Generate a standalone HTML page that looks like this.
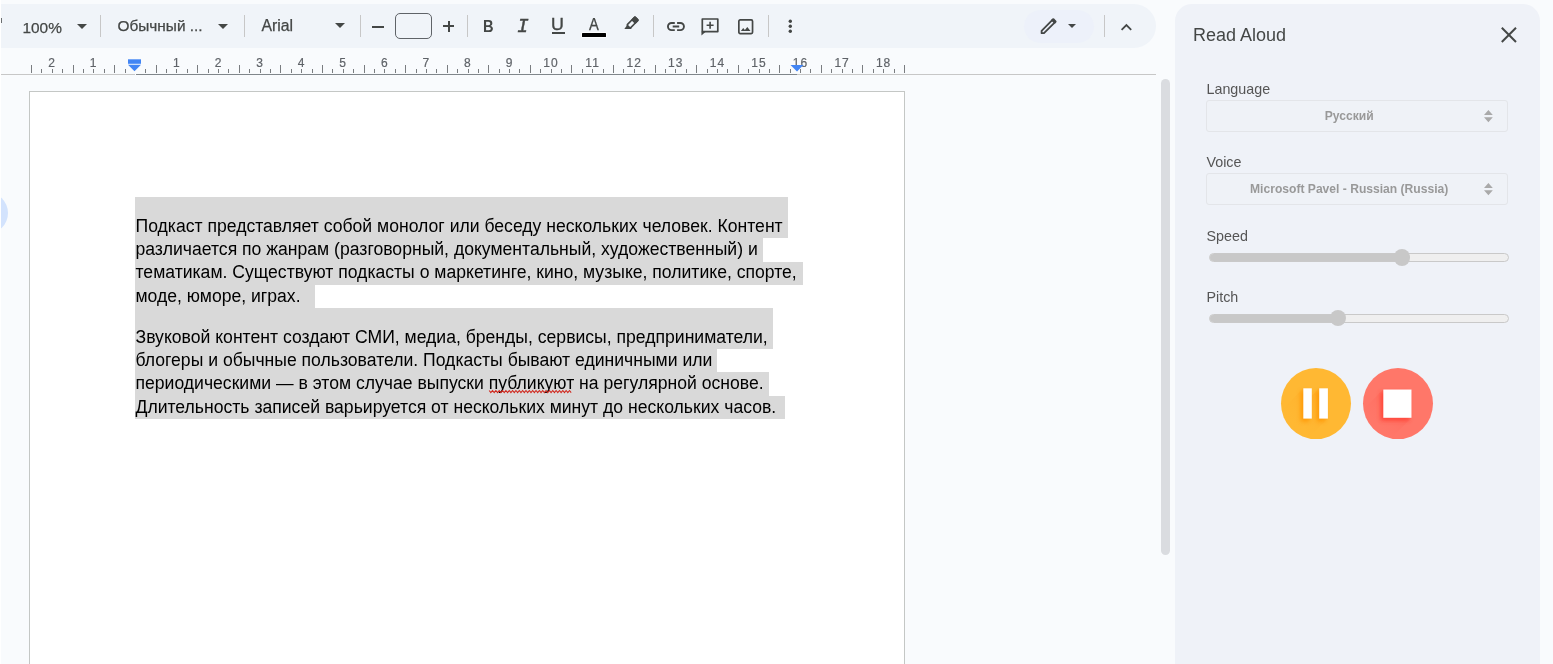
<!DOCTYPE html>
<html lang="ru">
<head>
<meta charset="utf-8">
<title>Read Aloud</title>
<style>
html,body{margin:0;padding:0;}
body{width:1553px;height:664px;overflow:hidden;position:relative;background:#f9fbfd;font-family:"Liberation Sans",sans-serif;color:#000;}
.abs{position:absolute;}
/* toolbar */
#toolbar{position:absolute;left:1px;top:4px;width:1155px;height:44px;background:#f0f4f9;border-radius:0 22px 22px 0;}
.tsep{position:absolute;top:15px;width:1px;height:22px;background:#c7c7c7;}
.ttext{position:absolute;font-size:15.4px;color:#444746;white-space:nowrap;line-height:18px;-webkit-text-stroke:0.25px #444746;}
.caret{position:absolute;width:0;height:0;border-left:5px solid transparent;border-right:5px solid transparent;border-top:5px solid #444746;}
svg{position:absolute;overflow:visible;}
/* ruler */
#ruler{position:absolute;left:0;top:52px;width:1156px;height:23px;}
.rnum{position:absolute;top:58px;font-size:12px;line-height:10px;color:#5f6368;width:30px;text-align:center;letter-spacing:1px;-webkit-text-stroke:0.2px #5f6368;}
/* page */
#page{position:absolute;left:29px;top:91px;width:876px;height:600px;background:#fff;border:1px solid #c4c7c5;box-sizing:border-box;}
.hl{position:absolute;background:#d9d9d9;}
.ln{position:absolute;left:135.5px;font-size:17.6px;line-height:20px;white-space:nowrap;color:#000;}
/* panel */
#panel{position:absolute;left:1175px;top:4px;width:365px;height:700px;background:#eff2f8;border-radius:17px;}
.plabel{position:absolute;left:1206.5px;font-size:14.3px;line-height:16px;color:#555;white-space:nowrap;}
.psel{position:absolute;left:1206px;width:302px;height:31.5px;box-sizing:border-box;border:1px solid #e3e5e9;border-radius:3px;background:#eff2f7;}
.pseltxt{position:absolute;left:1207.2px;width:284px;text-align:center;font-size:12.1px;font-weight:bold;color:#999;line-height:14px;white-space:nowrap;}
.track{position:absolute;left:1209px;width:300px;height:9px;box-sizing:border-box;border:1px solid #c9c9c9;border-radius:5px;background:#efefef;overflow:hidden;}
.track i{position:absolute;left:0;top:0;bottom:0;background:#c8c8c8;}
.thumb{position:absolute;width:16.4px;height:16.4px;border-radius:50%;background:#c8c8c8;}
</style>
</head>
<body>
<div id="root" style="position:absolute;left:0;top:0;width:1553px;height:664px;will-change:transform;">

<!-- TOOLBAR -->
<div id="toolbar"></div>
<div class="abs" style="left:1px;top:18.3px;width:1px;height:5px;background:#6b6e70;"></div>
<div class="ttext" style="left:22.5px;top:18.5px;">100%</div>
<div class="caret" style="left:76.7px;top:24px;"></div>
<div class="tsep" style="left:100px;"></div>
<div class="ttext" style="left:117.5px;top:16.5px;">Обычный ...</div>
<div class="caret" style="left:218px;top:24px;"></div>
<div class="tsep" style="left:244px;"></div>
<div class="ttext" style="left:261.5px;top:16.5px;font-size:15.8px;">Arial</div>
<div class="caret" style="left:334.8px;top:23px;"></div>
<div class="tsep" style="left:360px;"></div>
<div class="abs" style="left:372px;top:25.5px;width:12px;height:2px;background:#444746;"></div>
<div class="abs" style="left:395px;top:13px;width:37px;height:26px;box-sizing:border-box;border:1px solid #5f6368;border-radius:5px;"></div>
<div class="abs" style="left:443px;top:25.3px;width:11.4px;height:2px;background:#444746;"></div>
<div class="abs" style="left:447.7px;top:20.6px;width:2px;height:11.4px;background:#444746;"></div>
<div class="tsep" style="left:467px;"></div>

<!-- B I U A -->
<div class="abs" style="left:483.1px;top:17.8px;font-size:17px;font-weight:bold;line-height:18px;color:#444746;transform:scaleX(0.86);transform-origin:0 0;">B</div>
<div id="icoI" class="abs" style="left:517px;top:16.1px;font-family:'Liberation Mono',monospace;font-style:italic;font-size:19.5px;line-height:22px;color:#444746;-webkit-text-stroke:0.45px #444746;">I</div>
<div id="icoU" class="abs" style="left:551.2px;top:13.7px;font-size:16.5px;line-height:20px;color:#444746;-webkit-text-stroke:0.35px #444746;transform:scaleX(1.08);transform-origin:0 0;">U</div>
<div class="abs" style="left:552px;top:32px;width:12.8px;height:1.6px;background:#444746;"></div>
<div id="icoA" class="abs" style="left:588.7px;top:15.3px;font-size:15.7px;line-height:20px;color:#444746;transform:scaleX(0.94);transform-origin:0 0;-webkit-text-stroke:0.25px #444746;">A</div>
<div class="abs" style="left:582px;top:33px;width:24px;height:4px;background:#000;box-shadow:0 0 0 0.8px #fff;border-radius:0.5px;"></div>
<!-- highlighter -->
<svg style="left:622px;top:14px;" width="20" height="18" viewBox="0 0 20 18"><g transform="translate(10.9,8.2) rotate(45)"><rect x="-2.3" y="-5.2" width="4.6" height="11.4" rx="0.9" fill="none" stroke="#444746" stroke-width="1.6"/><rect x="-3.05" y="-5.95" width="6.1" height="5.6" rx="1.2" fill="#444746"/></g><path d="M4.9 11.6L2.3 14.9H8.9L9.6 14.2Z" fill="#444746"/></svg>
<div class="tsep" style="left:653px;"></div>
<!-- link -->
<svg style="left:666.5px;top:21.9px;" width="17.9" height="9.1" viewBox="0 0 17.9 9.1"><path d="M7.8 0.95H4.55a3.6 3.6 0 0 0 0 7.2H7.8M10.1 0.95H13.35a3.6 3.6 0 0 1 0 7.2H10.1M5.7 4.55H12.2" stroke="#444746" stroke-width="1.9" fill="none"/></svg>
<!-- comment -->
<svg style="left:701px;top:17.8px;" width="18" height="18" viewBox="0 0 18 18"><path d="M1.3 1H16.8V13.6H1.3Z" stroke="#444746" stroke-width="1.7" fill="none" stroke-linejoin="round"/><path d="M0.45 13.6H5L0.45 17.6Z" fill="#444746"/><path d="M9.1 3.8V10.8M5.6 7.3H12.6" stroke="#444746" stroke-width="1.6" fill="none"/></svg>
<!-- image -->
<svg style="left:738px;top:18.5px;" width="15.4" height="15.4" viewBox="0 0 15.4 15.4"><rect x="0.85" y="0.85" width="13.7" height="13.7" rx="1.3" stroke="#444746" stroke-width="1.7" fill="none"/><path d="M2.9 12L5.2 8.9L6.9 11L9.3 7.9L12.5 12Z" fill="#444746"/></svg>
<div class="tsep" style="left:768px;"></div>
<svg style="left:788px;top:19px;" width="5" height="15" viewBox="0 0 5 15"><circle cx="2.3" cy="2.2" r="1.7" fill="#444746"/><circle cx="2.3" cy="7.3" r="1.7" fill="#444746"/><circle cx="2.3" cy="12.3" r="1.7" fill="#444746"/></svg>

<!-- mode pill -->
<div class="abs" style="left:1024px;top:10px;width:69.5px;height:33px;border-radius:17px;background:#edf1fa;"></div>
<svg style="left:1041px;top:18px;" width="16" height="16" viewBox="0 0 16 16"><path d="M11.2 2.2L13.6 4.6L3 15.2H0.6V12.8Z" stroke="#444746" stroke-width="1.8" fill="none" stroke-linejoin="round"/><path d="M11.4 0.6a1.2 1.2 0 0 1 1.7 0L15.2 2.7a1.2 1.2 0 0 1 0 1.7L13.9 5.7L10.1 1.9Z" fill="#444746"/></svg>
<div class="caret" style="left:1067.5px;top:24px;border-left-width:4.4px;border-right-width:4.4px;border-top-width:4.6px;"></div>
<div class="tsep" style="left:1104px;"></div>
<svg style="left:1121px;top:23px;" width="11" height="8" viewBox="0 0 11 8"><path d="M0.6 6.8L5.4 2L10.2 6.8" stroke="#444746" stroke-width="1.8" fill="none"/></svg>

<!-- RULER -->
<div class="abs" style="left:0;top:74px;width:135px;height:1px;background:#c7c7c7;"></div>
<div class="abs" style="left:136px;top:74px;width:661px;height:1px;background:#80868b;"></div>
<div class="abs" style="left:797px;top:74px;width:359px;height:1px;background:#c7c7c7;"></div>
<svg id="rulersvg" style="left:0;top:52px;" width="1156" height="23" viewBox="0 0 1156 23"><path d="M31.5 13V21M41.5 17V21M52.5 17V21M62.5 17V21M73.5 13V21M83.5 17V21M93.5 17V21M104.5 17V21M114.5 13V21M125.5 17V21M145.5 17V21M156.5 13V21M166.5 17V21M176.5 17V21M187.5 17V21M197.5 13V21M208.5 17V21M218.5 17V21M228.5 17V21M239.5 13V21M249.5 17V21M260.5 17V21M270.5 17V21M280.5 13V21M291.5 17V21M301.5 17V21M312.5 17V21M322.5 13V21M332.5 17V21M343.5 17V21M353.5 17V21M364.5 13V21M374.5 17V21M384.5 17V21M395.5 17V21M405.5 13V21M416.5 17V21M426.5 17V21M436.5 17V21M447.5 13V21M457.5 17V21M468.5 17V21M478.5 17V21M488.5 13V21M499.5 17V21M509.5 17V21M519.5 17V21M530.5 13V21M540.5 17V21M551.5 17V21M561.5 17V21M571.5 13V21M582.5 17V21M592.5 17V21M603.5 17V21M613.5 13V21M623.5 17V21M634.5 17V21M644.5 17V21M655.5 13V21M665.5 17V21M675.5 17V21M686.5 17V21M696.5 13V21M707.5 17V21M717.5 17V21M727.5 17V21M738.5 13V21M748.5 17V21M759.5 17V21M769.5 17V21M779.5 13V21M790.5 17V21M800.5 17V21M810.5 17V21M821.5 13V21M831.5 17V21M842.5 17V21M852.5 17V21M862.5 13V21M873.5 17V21M883.5 17V21M894.5 17V21M904.5 13V21" stroke="#7a7d80" stroke-width="1" fill="none"/></svg>
<div id="rnums"><div class="rnum" style="left:37.1px">2</div><div class="rnum" style="left:78.7px">1</div><div class="rnum" style="left:161.9px">1</div><div class="rnum" style="left:203.5px">2</div><div class="rnum" style="left:245.0px">3</div><div class="rnum" style="left:286.6px">4</div><div class="rnum" style="left:328.2px">5</div><div class="rnum" style="left:369.8px">6</div><div class="rnum" style="left:411.3px">7</div><div class="rnum" style="left:452.9px">8</div><div class="rnum" style="left:494.5px">9</div><div class="rnum" style="left:536.0px">10</div><div class="rnum" style="left:577.6px">11</div><div class="rnum" style="left:619.2px">12</div><div class="rnum" style="left:660.8px">13</div><div class="rnum" style="left:702.4px">14</div><div class="rnum" style="left:743.9px">15</div><div class="rnum" style="left:785.5px">16</div><div class="rnum" style="left:827.1px">17</div><div class="rnum" style="left:868.6px">18</div></div>
<!-- markers -->
<svg style="left:128px;top:59px;" width="14" height="13" viewBox="0 0 14 13"><rect x="0" y="0.3" width="13" height="4.5" fill="#4285f4"/><path d="M0 5.8H13L6.5 12.2Z" fill="#4285f4"/></svg>
<svg style="left:790px;top:65px;" width="14" height="7" viewBox="0 0 14 7"><path d="M0.5 0H13.5L7 6.5Z" fill="#4285f4"/></svg>

<!-- PAGE -->
<div id="page"></div>
<div class="abs" style="left:-34px;top:192px;width:42px;height:42px;border-radius:50%;background:#d3e3fd;"></div>
<div class="abs" style="left:0;top:0;width:1px;height:664px;background:#fff;"></div>

<div class="hl" style="left:135px;top:197px;width:653px;height:41px;"></div>
<div class="hl" style="left:135px;top:238px;width:628px;height:24px;"></div>
<div class="hl" style="left:135px;top:262px;width:667.5px;height:23px;"></div>
<div class="hl" style="left:135px;top:285px;width:180px;height:23px;"></div>
<div class="hl" style="left:135px;top:308px;width:638px;height:41px;"></div>
<div class="hl" style="left:135px;top:349px;width:582.3px;height:23px;"></div>
<div class="hl" style="left:135px;top:372px;width:633.7px;height:24px;"></div>
<div class="hl" style="left:135px;top:396px;width:650px;height:23px;"></div>

<div class="ln" style="top:215.8px;">Подкаст представляет собой монолог или беседу нескольких человек. Контент</div>
<div class="ln" style="top:239.1px;">различается по жанрам (разговорный, документальный, художественный) и</div>
<div class="ln" style="top:262.4px;">тематикам. Существуют подкасты о маркетинге, кино, музыке, политике, спорте,</div>
<div class="ln" style="top:285.6px;">моде, юморе, играх.</div>
<div class="ln" style="top:327px;">Звуковой контент создают СМИ, медиа, бренды, сервисы, предприниматели,</div>
<div class="ln" style="top:350.3px;">блогеры и обычные пользователи. Подкасты бывают единичными или</div>
<div class="ln" style="top:373.2px;">периодическими — в этом случае выпуски публикуют на регулярной основе.</div>
<div class="ln" style="top:396.5px;">Длительность записей варьируется от нескольких минут до нескольких часов.</div>

<svg style="left:489px;top:390.1px;" width="84" height="3.2" viewBox="0 0 84 3.2"><path d="M0.00 0.50L1.68 2.70L3.36 0.50L5.04 2.70L6.72 0.50L8.40 2.70L10.08 0.50L11.76 2.70L13.44 0.50L15.12 2.70L16.80 0.50L18.48 2.70L20.16 0.50L21.84 2.70L23.52 0.50L25.20 2.70L26.88 0.50L28.56 2.70L30.24 0.50L31.92 2.70L33.60 0.50L35.28 2.70L36.96 0.50L38.64 2.70L40.32 0.50L42.00 2.70L43.68 0.50L45.36 2.70L47.04 0.50L48.72 2.70L50.40 0.50L52.08 2.70L53.76 0.50L55.44 2.70L57.12 0.50L58.80 2.70L60.48 0.50L62.16 2.70L63.84 0.50L65.52 2.70L67.20 0.50L68.88 2.70L70.56 0.50L72.24 2.70L73.92 0.50L75.60 2.70L77.28 0.50L78.96 2.70L80.64 0.50L82.32 2.70" stroke="#d0271d" stroke-width="1.05" fill="none"/></svg>
<!-- scrollbar -->
<div class="abs" style="left:1161px;top:79px;width:9px;height:476px;border-radius:5px;background:#dadce0;"></div>

<!-- PANEL -->
<div id="panel"></div>
<div class="abs" style="left:1193px;top:24px;font-size:18px;line-height:22px;color:#444746;white-space:nowrap;">Read Aloud</div>
<svg style="left:1500.9px;top:27.3px;" width="16" height="16" viewBox="0 0 16 16"><path d="M0.8 0.8L15 15M15 0.8L0.8 15" stroke="#444746" stroke-width="2" fill="none"/></svg>

<div class="plabel" style="top:81px;">Language</div>
<div class="psel" style="top:100px;"></div>
<div class="pseltxt" style="top:109px;">Русский</div>
<svg style="left:1483.5px;top:110px;" width="9" height="13" viewBox="0 0 9 13"><path d="M0 5L4.4 0L8.8 5Z M0 7.2H8.8L4.4 12.3Z" fill="#a9a9a9"/></svg>

<div class="plabel" style="top:154px;">Voice</div>
<div class="psel" style="top:173px;"></div>
<div class="pseltxt" style="top:182px;">Microsoft Pavel - Russian (Russia)</div>
<svg style="left:1483.5px;top:183px;" width="9" height="13" viewBox="0 0 9 13"><path d="M0 5L4.4 0L8.8 5Z M0 7.2H8.8L4.4 12.3Z" fill="#a9a9a9"/></svg>

<div class="plabel" style="top:228px;">Speed</div>
<div class="track" style="top:253px;"><i style="width:193px;"></i></div>
<div class="thumb" style="left:1393.8px;top:249.2px;"></div>

<div class="plabel" style="top:289px;">Pitch</div>
<div class="track" style="top:314px;"><i style="width:129px;"></i></div>
<div class="thumb" style="left:1329.6px;top:310.1px;"></div>

<!-- buttons -->
<svg style="left:1280.9px;top:367.8px;" width="71" height="72" viewBox="0 0 71 72">
  <defs><clipPath id="c1"><ellipse cx="35" cy="35.6" rx="35" ry="35.5"/></clipPath>
  <filter id="f1" x="-1" y="-1" width="3" height="3"><feGaussianBlur stdDeviation="2.2"/></filter>
  <linearGradient id="g1" gradientUnits="userSpaceOnUse" x1="40" y1="30" x2="10" y2="60"><stop offset="0" stop-color="#ffa51f" stop-opacity="0.5"/><stop offset="1" stop-color="#ffb833" stop-opacity="0"/></linearGradient></defs>
  <ellipse cx="35" cy="35.6" rx="35" ry="35.5" fill="#ffb833"/>
  <g clip-path="url(#c1)">
    <path d="M22.3 20.3H30.8V50.6L10.8 70.6L2.3 40.3Z" fill="url(#g1)"/>
    <path d="M38.2 20.3H46.9V50.6L26.9 70.6L18.2 40.3Z" fill="url(#g1)"/>
    <g filter="url(#f1)" fill="#ff9500" opacity="0.85"><rect x="19.8" y="23" width="8.5" height="30.3"/><rect x="35.7" y="23" width="8.7" height="30.3"/></g>
  </g>
  <rect x="22.3" y="20.3" width="8.5" height="30.3" fill="#fff"/>
  <rect x="38.2" y="20.3" width="8.7" height="30.3" fill="#fff"/>
</svg>
<svg style="left:1363px;top:367.8px;" width="71" height="72" viewBox="0 0 71 72">
  <defs><clipPath id="c2"><ellipse cx="35" cy="35.6" rx="35" ry="35.5"/></clipPath>
  <filter id="f2" x="-1" y="-1" width="3" height="3"><feGaussianBlur stdDeviation="2.2"/></filter>
  <linearGradient id="g2" gradientUnits="userSpaceOnUse" x1="40" y1="30" x2="10" y2="60"><stop offset="0" stop-color="#ff5247" stop-opacity="0.5"/><stop offset="1" stop-color="#ff7769" stop-opacity="0"/></linearGradient></defs>
  <ellipse cx="35" cy="35.6" rx="35" ry="35.5" fill="#ff7769"/>
  <g clip-path="url(#c2)">
    <path d="M20.3 21.5H48.5V49.8L28.5 69.8L0.3 41.5Z" fill="url(#g2)"/>
    <rect x="17.8" y="24.2" width="28.2" height="28.3" fill="#ff3b2f" opacity="0.8" filter="url(#f2)"/>
  </g>
  <rect x="20.3" y="21.5" width="28.2" height="28.3" fill="#fff"/>
</svg>

</div>
</body>
</html>
